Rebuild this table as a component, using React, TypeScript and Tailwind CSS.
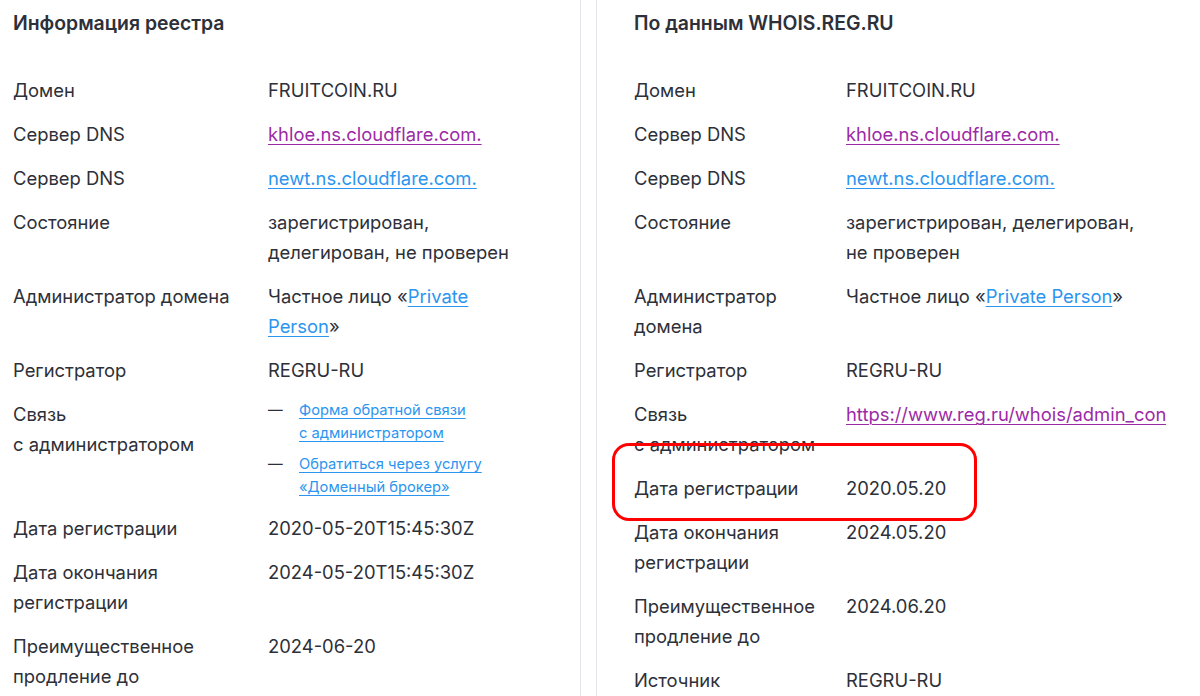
import React from "react";

type Row = { label: React.ReactNode; value: React.ReactNode };

const visited = "text-[#9c2aa6] underline underline-offset-[3px] decoration-1";
const link = "text-[#2b95ef] underline underline-offset-[3px] decoration-1";

const leftRows: Row[] = [
  { label: "Домен", value: "FRUITCOIN.RU" },
  { label: "Сервер DNS", value: <a className={visited}>khloe.ns.cloudflare.com.</a> },
  { label: "Сервер DNS", value: <a className={link}>newt.ns.cloudflare.com.</a> },
  { label: "Состояние", value: "зарегистрирован, делегирован, не проверен" },
  {
    label: "Администратор домена",
    value: (
      <>
        Частное лицо «<a className={link}>Private Person</a>»
      </>
    ),
  },
  { label: "Регистратор", value: "REGRU-RU" },
  {
    label: (
      <>
        Связь
        <br />с администратором
      </>
    ),
    value: (
      <ul className="flex flex-col gap-[8px] text-[14.7px] leading-[23px]">
        <li className="flex">
          <span className="w-[31px] shrink-0">—</span>
          <a className={link}>
            Форма обратной связи
            <br />с администратором
          </a>
        </li>
        <li className="flex">
          <span className="w-[31px] shrink-0">—</span>
          <a className={link}>
            Обратиться через услугу
            <br />
            «Доменный брокер»
          </a>
        </li>
      </ul>
    ),
  },
  { label: "Дата регистрации", value: "2020-05-20T15:45:30Z" },
  { label: "Дата окончания регистрации", value: "2024-05-20T15:45:30Z" },
  { label: "Преимущественное продление до", value: "2024-06-20" },
];

const rightRows: Row[] = [
  { label: "Домен", value: "FRUITCOIN.RU" },
  { label: "Сервер DNS", value: <a className={visited}>khloe.ns.cloudflare.com.</a> },
  { label: "Сервер DNS", value: <a className={link}>newt.ns.cloudflare.com.</a> },
  { label: "Состояние", value: "зарегистрирован, делегирован, не проверен" },
  {
    label: "Администратор домена",
    value: (
      <>
        Частное лицо «<a className={link}>Private Person</a>»
      </>
    ),
  },
  { label: "Регистратор", value: "REGRU-RU" },
  {
    label: (
      <>
        Связь
        <br />с администратором
      </>
    ),
    value: (
      <a className={`${visited} whitespace-nowrap`}>
        https://www.reg.ru/whois/admin_contact?dname=fruitcoin.ru
      </a>
    ),
  },
  { label: "Дата регистрации", value: "2020.05.20" },
  { label: "Дата окончания регистрации", value: "2024.05.20" },
  { label: "Преимущественное продление до", value: "2024.06.20" },
  { label: "Источник", value: "REGRU-RU" },
];

const Table: React.FC<{ rows: Row[]; cols: string }> = ({ rows, cols }) => (
  <div className="mt-[30px] flex flex-col">
    {rows.map((r, i) => (
      <div key={i} className={`grid ${cols} py-[7px]`}>
        <div className="pr-[12px]">{r.label}</div>
        <div>{r.value}</div>
      </div>
    ))}
  </div>
);

export default function App() {
  return (
    <div
      className="flex h-[696px] w-[1200px] overflow-hidden bg-white text-[18.4px] leading-[30px] text-[#2d3039]"
      style={{ fontFamily: "Inter, 'Noto Sans', sans-serif" }}
    >
      <section className="w-[581px] shrink-0 border-r border-[#e4e5ea] pl-[13px] pr-[50px] pt-[8px]">
        <h2 className="text-[19.4px] font-semibold leading-[30px]">Информация реестра</h2>
        <Table rows={leftRows} cols="grid-cols-[255px_minmax(0,1fr)]" />
      </section>
      <section className="relative ml-[15px] w-[570px] shrink-0 overflow-hidden border-l border-[#e4e5ea] pl-[37px] pr-[16px] pt-[8px]">
        <h2 className="text-[19.4px] font-semibold leading-[30px]">По данным WHOIS.REG.RU</h2>
        <Table rows={rightRows} cols="grid-cols-[212px_minmax(0,1fr)]" />
        <div className="pointer-events-none absolute left-[15px] top-[443px] h-[78px] w-[365px] rounded-[17px] border-[3px] border-[#ff0000]" />
      </section>
    </div>
  );
}
